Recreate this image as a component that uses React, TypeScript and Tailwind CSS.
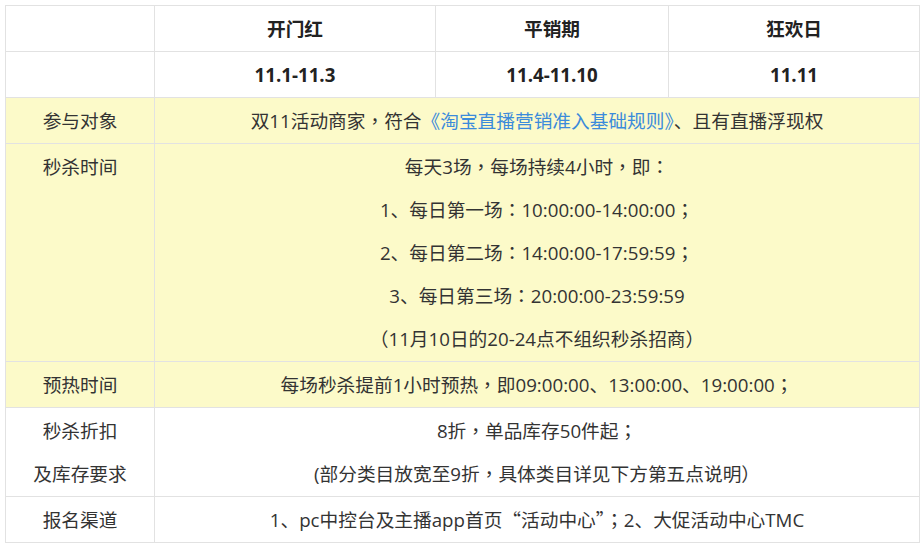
const cell = "border border-[#e2e2e2] text-center leading-[43px] py-px px-2";

// full-width punctuation set centred, as in the reference font
function T({ s }: { s: string }) {
  return (
    <>
      {Array.from(s).map((ch, i) =>
        "，：；（）“”".includes(ch) ? (
          <span key={i} className="leading-none font-['Noto_Sans_CJK_TC',sans-serif] [font-feature-settings:'fwid']">
            {ch}
          </span>
        ) : (
          ch
        )
      )}
    </>
  );
}

export default function App() {
  return (
    <div className="w-[922px] h-[553px] bg-white pt-[5px] pl-[5px] text-[18.7px] text-[#333] font-['Segoe_UI','Open_Sans','Noto_Sans_CJK_SC',sans-serif]">
      <table className="w-[914px] border-collapse table-fixed">
        <colgroup>
          <col className="w-[149px]" />
          <col className="w-[281px]" />
          <col className="w-[233px]" />
          <col className="w-[251px]" />
        </colgroup>
        <tbody>
          <tr className="font-bold text-[#222]">
            <td className={cell}></td>
            <td className={cell}>开门红</td>
            <td className={cell}>平销期</td>
            <td className={cell}>狂欢日</td>
          </tr>
          <tr className="font-bold text-[#222]">
            <td className={cell}></td>
            <td className={cell}>11.1-11.3</td>
            <td className={cell}>11.4-11.10</td>
            <td className={cell}>11.11</td>
          </tr>
          <tr className="bg-[#fcfac9]">
            <td className={cell}>参与对象</td>
            <td className={cell} colSpan={3}>
              <T s="双11活动商家，符合" />
              <span className="text-[#3b8bdb]">《淘宝直播营销准入基础规则》</span>
              <T s="、且有直播浮现权" />
            </td>
          </tr>
          <tr className="bg-[#fcfac9]">
            <td className={cell + " align-top"}>秒杀时间</td>
            <td className={cell} colSpan={3}>
              <div><T s="每天3场，每场持续4小时，即：" /></div>
              <div><T s="1、每日第一场：10:00:00-14:00:00；" /></div>
              <div><T s="2、每日第二场：14:00:00-17:59:59；" /></div>
              <div><T s="3、每日第三场：20:00:00-23:59:59" /></div>
              <div><T s="（11月10日的20-24点不组织秒杀招商）" /></div>
            </td>
          </tr>
          <tr className="bg-[#fcfac9]">
            <td className={cell}>预热时间</td>
            <td className={cell} colSpan={3}>
              <T s="每场秒杀提前1小时预热，即09:00:00、13:00:00、19:00:00；" />
            </td>
          </tr>
          <tr>
            <td className={cell}>
              <div>秒杀折扣</div>
              <div>及库存要求</div>
            </td>
            <td className={cell} colSpan={3}>
              <div><T s="8折，单品库存50件起；" /></div>
              <div><T s="(部分类目放宽至9折，具体类目详见下方第五点说明）" /></div>
            </td>
          </tr>
          <tr>
            <td className={cell}>报名渠道</td>
            <td className={cell} colSpan={3}>
              <T s="1、pc中控台及主播app首页“活动中心”；2、大促活动中心TMC" />
            </td>
          </tr>
        </tbody>
      </table>
    </div>
  );
}
